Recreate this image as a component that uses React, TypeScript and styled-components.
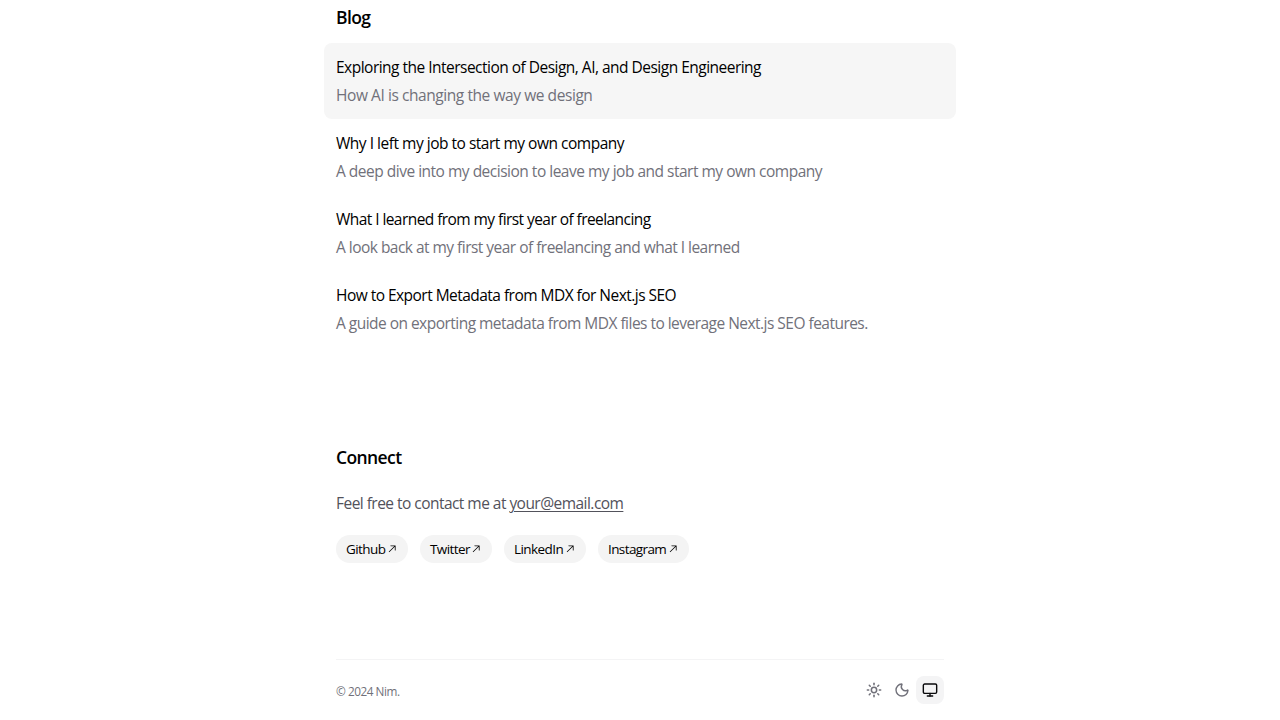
import React from 'react';
import styled, { createGlobalStyle } from 'styled-components';
import { Sun, Moon, Monitor } from 'lucide-react';

const GlobalStyle = createGlobalStyle`
  *, *::before, *::after { box-sizing: border-box; }
  html, body { margin: 0; background: #fff; overflow: hidden; }
  body { font-family: "Open Sans", "Noto Sans", sans-serif; color: #000; height: 720px; }
  h3, p { margin: 0; }
  a { color: inherit; text-decoration: none; }
`;

const Page = styled.div`
  width: 640px;
  height: 720px;
  margin: 0 auto;
  padding: 3px 16px 0;
  display: flex;
  flex-direction: column;
`;

const Heading = styled.h3`
  font-size: 17.5px;
  line-height: 28px;
  font-weight: 600;
  letter-spacing: -0.6px;
`;

const PostList = styled.div`
  margin: 12px -12px 0;
  display: flex;
  flex-direction: column;
`;

const Post = styled.a<{ $active?: boolean }>`
  display: flex;
  flex-direction: column;
  gap: 4px;
  padding: 12px;
  border-radius: 8px;
  background: ${(p) => (p.$active ? '#f6f6f6' : 'transparent')};
`;

const Line = styled.p<{ $tracking: number; $color?: string }>`
  font-size: 15.5px;
  line-height: 24px;
  white-space: nowrap;
  letter-spacing: ${(p) => p.$tracking}px;
  color: ${(p) => p.$color ?? '#000'};
`;

const ConnectSection = styled.section`
  margin-top: 96px;
`;

const Contact = styled(Line)`
  margin-top: 20px;
`;

const MailLink = styled.a`
  text-decoration: underline;
  text-decoration-thickness: 1px;
  text-underline-offset: 2px;
`;

const Pills = styled.div`
  display: flex;
  gap: 12px;
  margin-top: 20px;
`;

const Pill = styled.a<{ $width: number; $tracking: number }>`
  display: flex;
  align-items: center;
  justify-content: space-between;
  width: ${(p) => p.$width}px;
  height: 28px;
  padding: 0 10px;
  border-radius: 14px;
  background: #f4f4f4;
  font-size: 13.5px;
  line-height: 20px;
  letter-spacing: ${(p) => p.$tracking}px;
  white-space: nowrap;
`;

const Arrow = styled.svg`
  flex: none;
  width: 12px;
  height: 12px;
`;

const Footer = styled.footer`
  display: flex;
  align-items: center;
  justify-content: space-between;
  margin-top: 96px;
  padding-top: 16px;
  border-top: 1px solid #f4f4f5;
`;

const Copyright = styled.span`
  padding-top: 1px;
  font-size: 11.75px;
  line-height: 16px;
  letter-spacing: -0.45px;
  color: #71717a;
`;

const Themes = styled.div`
  display: flex;
`;

const ThemeButton = styled.button<{ $active?: boolean }>`
  display: flex;
  align-items: center;
  justify-content: center;
  width: 28px;
  height: 28px;
  padding: 0;
  border: 0;
  border-radius: 8px;
  background: ${(p) => (p.$active ? '#f4f4f5' : 'transparent')};
  color: ${(p) => (p.$active ? '#09090b' : '#71717a')};
`;

const posts = [
  { title: 'Exploring the Intersection of Design, AI, and Design Engineering', titleTracking: -0.514, text: 'How AI is changing the way we design', textTracking: -0.43 },
  { title: 'Why I left my job to start my own company', titleTracking: -0.485, text: 'A deep dive into my decision to leave my job and start my own company', textTracking: -0.495 },
  { title: 'What I learned from my first year of freelancing', titleTracking: -0.565, text: 'A look back at my first year of freelancing and what I learned', textTracking: -0.525 },
  { title: 'How to Export Metadata from MDX for Next.js SEO', titleTracking: -0.53, text: 'A guide on exporting metadata from MDX files to leverage Next.js SEO features.', textTracking: -0.526 },
];

const socials = [
  { name: 'Github', width: 72, tracking: -0.58 },
  { name: 'Twitter', width: 72, tracking: -0.6 },
  { name: 'LinkedIn', width: 82, tracking: -0.58 },
  { name: 'Instagram', width: 91, tracking: -0.6 },
];

export default function App() {
  return (
    <>
      <GlobalStyle />
      <Page>
        <section>
          <Heading>Blog</Heading>
          <PostList>
            {posts.map((p, i) => (
              <Post key={p.title} href="#" $active={i === 0}>
                <Line $tracking={p.titleTracking}>{p.title}</Line>
                <Line $tracking={p.textTracking} $color="#71717a">{p.text}</Line>
              </Post>
            ))}
          </PostList>
        </section>
        <ConnectSection>
          <Heading>Connect</Heading>
          <Contact $tracking={-0.535} $color="#52525b">
            Feel free to contact me at <MailLink href="#">your@email.com</MailLink>
          </Contact>
          <Pills>
            {socials.map((s) => (
              <Pill key={s.name} href="#" $width={s.width} $tracking={s.tracking}>
                {s.name}
                <Arrow viewBox="0 0 15 15" fill="currentColor">
                  <path
                    fillRule="evenodd"
                    clipRule="evenodd"
                    d="M3.64645 11.3536C3.45118 11.1583 3.45118 10.8417 3.64645 10.6465L10.2929 4L6 4C5.72386 4 5.5 3.77614 5.5 3.5C5.5 3.22386 5.72386 3 6 3L11.5 3C11.6326 3 11.7598 3.05268 11.8536 3.14645C11.9473 3.24022 12 3.36739 12 3.5L12 9C12 9.27615 11.7761 9.5 11.5 9.5C11.2239 9.5 11 9.27615 11 9V4.70711L4.35355 11.3536C4.15829 11.5488 3.84171 11.5488 3.64645 11.3536Z"
                  />
                </Arrow>
              </Pill>
            ))}
          </Pills>
        </ConnectSection>
        <Footer>
          <Copyright>© 2024 Nim.</Copyright>
          <Themes>
            <ThemeButton aria-label="Light"><Sun size={16} strokeWidth={2.3} /></ThemeButton>
            <ThemeButton aria-label="Dark"><Moon size={16} strokeWidth={2.1} /></ThemeButton>
            <ThemeButton aria-label="System" $active><Monitor size={16} strokeWidth={2.1} /></ThemeButton>
          </Themes>
        </Footer>
      </Page>
    </>
  );
}
